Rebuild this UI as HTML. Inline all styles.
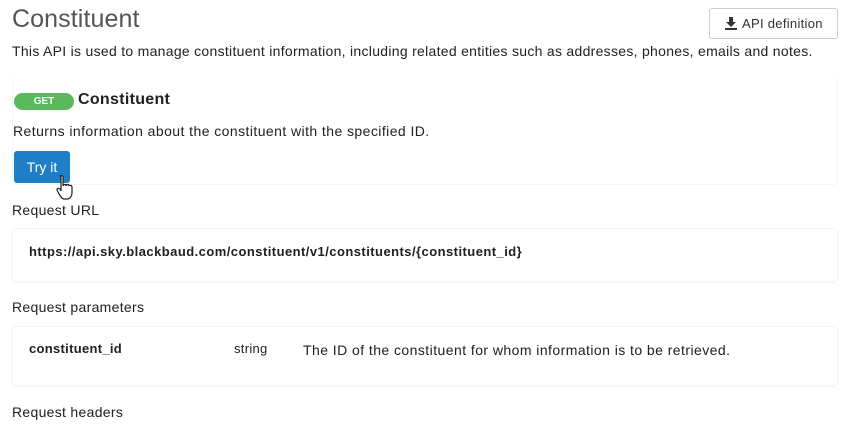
<!DOCTYPE html>
<html><head><style>
*{margin:0;padding:0;box-sizing:border-box}
body{width:844px;height:429px;overflow:hidden;background:#fff;font-family:"Liberation Sans",sans-serif;color:#212121;font-size:14px;position:relative}
.a{position:absolute;white-space:nowrap}
.box{position:absolute;left:12px;width:826px;border-radius:4px;box-shadow:0 1px 2px rgba(0,0,0,0.05);border:1px solid #f4f4f4}
</style></head><body>
<div class="a" style="left:12px;top:5px;font-size:25px;color:#555;letter-spacing:0.1px">Constituent</div>
<div class="a" style="left:709px;top:8px;width:129px;height:31px;border:1px solid #ccc;border-radius:3px;font-size:13px;color:#333;padding:7px 0 0 14px">
<svg width="12" height="13" viewBox="0 0 12 13" style="position:absolute;left:15px;top:8px"><path d="M4 0h4v5h3L6 10 1 5h3z" fill="#333"/><rect x="0" y="11" width="12" height="2" fill="#333"/></svg>
<span style="margin-left:18px;letter-spacing:0.3px">API definition</span></div>
<div class="a" style="left:12px;top:43px;letter-spacing:0.29px">This API is used to manage constituent information, including related entities such as addresses, phones, emails and notes.</div>
<div class="box" style="top:76px;height:109px;border-top:none;box-shadow:none;border-color:#f6f6f6"></div>
<div class="a" style="left:14px;top:93px;width:60px;height:17px;background:#5cb85c;border-radius:9px;color:#fff;font-size:10px;font-weight:bold;text-align:center;line-height:17px">GET</div>
<div class="a" style="left:78px;top:91px;font-size:16px;font-weight:bold;letter-spacing:0.3px">Constituent</div>
<div class="a" style="left:13px;top:123px;letter-spacing:0.43px">Returns information about the constituent with the specified ID.</div>
<div class="a" style="left:14px;top:151px;width:56px;height:32px;background:#1f7fc6;border-radius:3px;color:#fff;font-size:14px;text-align:center;line-height:32px">Try it</div>
<svg class="a" style="left:55px;top:174px" width="24" height="28" viewBox="0 0 24 28"><path d="M5 2c1-1 3 0 3 1v9c0-2 3-2 3 0 0-2 3-2 3 0 0-1 3-1 3 1v6c0 3-2 6-5 6H9c-2 0-3-2-5-5l-2-4c0-2 2-2 3-1l1 2V3z" fill="#fff" stroke="#222" stroke-width="1.2"/></svg>
<div class="a" style="left:12px;top:202px;letter-spacing:0.3px">Request URL</div>
<div class="box" style="top:228px;height:54px"></div>
<div class="a" style="left:29px;top:244px;font-weight:bold;font-size:13px;letter-spacing:0.45px">https://api.sky.blackbaud.com/constituent/v1/constituents/{constituent_id}</div>
<div class="a" style="left:12px;top:299px;letter-spacing:0.3px">Request parameters</div>
<div class="box" style="top:326px;height:60px"></div>
<div class="a" style="left:29px;top:341px;font-weight:bold;font-size:13px;letter-spacing:0.3px">constituent_id</div>
<div class="a" style="left:234px;top:341px;font-size:13px;letter-spacing:0.3px">string</div>
<div class="a" style="left:303px;top:342px;letter-spacing:0.44px">The ID of the constituent for whom information is to be retrieved.</div>
<div class="a" style="left:12px;top:404px;letter-spacing:0.3px">Request headers</div>
</body></html>
